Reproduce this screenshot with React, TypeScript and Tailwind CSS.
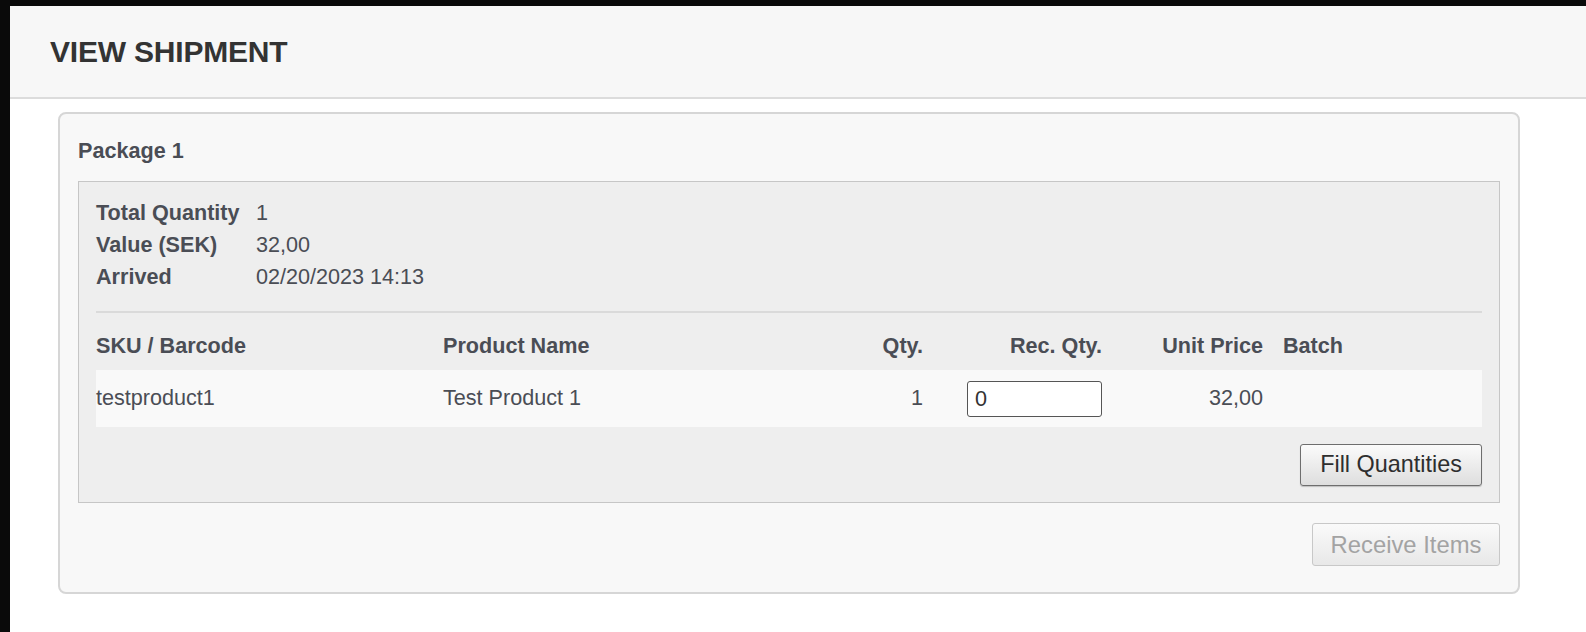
const font = { fontFamily: '"Liberation Sans", Arial, sans-serif' };

const infoRows = [
  { label: "Total Quantity", value: "1" },
  { label: "Value (SEK)", value: "32,00" },
  { label: "Arrived", value: "02/20/2023 14:13" }
];

export default function App() {
  return (
    <div
      className="flex h-[632px] w-[1586px] flex-col overflow-hidden border-l-[10px] border-t-[6px] border-[#0a0a0a] bg-white text-[#4a4d55]"
      style={font}
    >
      <header className="flex h-[93px] shrink-0 items-center border-b-2 border-[#dcdcdc] bg-[#f7f7f7] pl-[40px]">
        <h1 className="text-[30px] font-bold tracking-[-0.2px] text-[#333333]">VIEW SHIPMENT</h1>
      </header>

      <section className="ml-[48px] mt-[13px] w-[1462px] rounded-[8px] border-2 border-[#d6d6d6] bg-[#f8f8f8] px-[18px] pb-[26px] pt-[24px]">
        <h2 className="text-[21.6px] font-bold leading-[26px]">Package 1</h2>

        <div className="mt-[17px] border border-[#c6c6c6] bg-[#eeeeee] px-[17px] pb-[16px] pt-[15px]">
          <div className="flex flex-col">
            {infoRows.map((row) => (
              <div key={row.label} className="flex h-[32px] items-center text-[21.6px]">
                <span className="w-[160px] font-bold">{row.label}</span>
                <span>{row.value}</span>
              </div>
            ))}
          </div>

          <div className="mt-[18px] border-t-2 border-[#dadada]" />

          <div className="grid h-[57px] grid-cols-[347px_400px_80px_179px_161px_220px] items-center pt-[10px] text-[21.6px] font-bold">
            <span>SKU / Barcode</span>
            <span>Product Name</span>
            <span className="text-right">Qty.</span>
            <span className="text-right">Rec. Qty.</span>
            <span className="text-right">Unit Price</span>
            <span className="pl-[20px]">Batch</span>
          </div>

          <div className="grid h-[57px] grid-cols-[347px_400px_80px_179px_161px_220px] items-center bg-[#f9f9f9] text-[21.6px]">
            <span>testproduct1</span>
            <span>Test Product 1</span>
            <span className="text-right">1</span>
            <span className="flex justify-end">
              <input
                readOnly
                value="0"
                className="h-[36px] w-[135px] rounded-[3px] border border-[#555555] bg-white px-[7px] text-[21.6px] text-[#333333] outline-none"
                style={font}
              />
            </span>
            <span className="text-right">32,00</span>
            <span />
          </div>

          <div className="mt-[17px] flex justify-end">
            <button
              type="button"
              className="h-[42px] w-[182px] rounded-[3px] border border-[#6e6e6e] bg-gradient-to-b from-[#fbfbfb] to-[#dedede] text-[23.4px] text-[#2e2e2e] shadow-[0_1px_1px_rgba(0,0,0,0.2)]"
            >
              Fill Quantities
            </button>
          </div>
        </div>

        <div className="mt-[20px] flex justify-end">
          <button
            type="button"
            disabled
            className="h-[43px] w-[188px] rounded-[3px] border border-[#c8c8c8] bg-gradient-to-b from-[#fafafa] to-[#e8e8e8] text-[23.8px] text-[#a3a3a3]"
          >
            Receive Items
          </button>
        </div>
      </section>
    </div>
  );
}
